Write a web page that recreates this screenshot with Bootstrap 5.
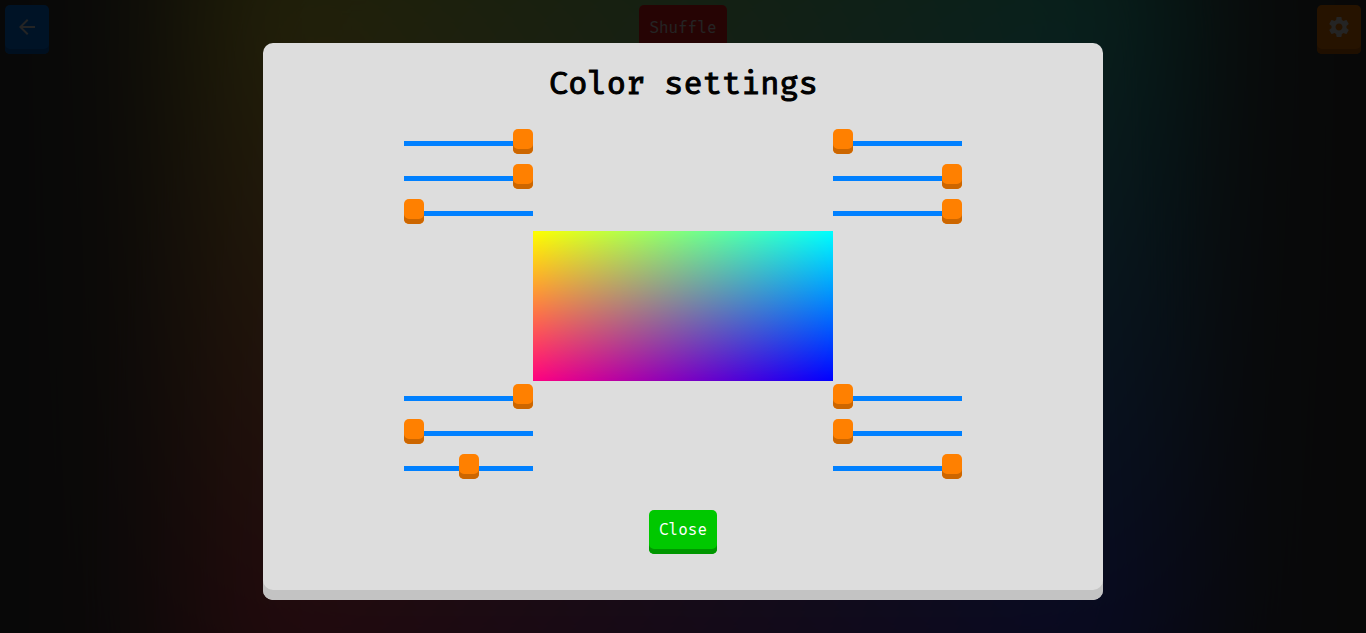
<!DOCTYPE html>
<html lang="en">
<head>
<meta charset="utf-8">
<meta name="viewport" content="width=device-width, initial-scale=1">
<title>Color settings</title>
<link href="https://cdn.jsdelivr.net/npm/bootstrap@5.3.0/dist/css/bootstrap.min.css" rel="stylesheet">
<style>
  body { font-family: "Fira Mono", "DejaVu Sans Mono", monospace; font-size: 16px; background: #3a3a3a; color: #000; }
  .backdrop-glow { inset: 0; overflow: hidden; }
  .blend { --tl: #ff0; --tr: #0ff; --bl: #ff0080; --br: #00f; background: linear-gradient(to right, var(--tl), var(--tr)); position: relative; }
  .blend::after { content: ""; position: absolute; inset: 0; background: linear-gradient(to right, var(--bl), var(--br));
    -webkit-mask-image: linear-gradient(to bottom, transparent, #000); mask-image: linear-gradient(to bottom, transparent, #000); }
  .glow-field.blend { --tl: #fffa28; --tr: #20ffd0; --bl: #ff2850; --br: #2828ff; position: absolute; inset: -110px 185px; filter: blur(75px); }
  .preview { width: 300px; height: 150px; }
  .preview-gap { width: 300px; }
  .toolbar { padding: 5px; }
  .key { height: 49px; min-width: 44px; border: 0; border-radius: 5px; padding: 0 10px 5px; color: #eee; line-height: 1; }
  .key-blue { background: #0080ff; box-shadow: inset 0 -5px #0066cc; }
  .key-red { background: #ff2020; box-shadow: inset 0 -5px #cc0000; padding-bottom: 3px; }
  .key-orange { background: #ff8000; box-shadow: inset 0 -5px #cc6600; }
  .key-green { background: #00c800; box-shadow: inset 0 -5px #009600; color: #fff; height: 44px; margin-top: 22px; }
  .shade { inset: 0; background: rgba(0, 0, 0, .85); padding-top: 43px; }
  .panel { width: 840px; height: 557px; background: #ddd; border-radius: 10px; box-shadow: inset 0 -10px #c3c3c3; }
  .panel h1 { font-size: 32px; line-height: 38px; font-weight: 400; -webkit-text-stroke: 1.1px #000; margin: 21px 0 22px; padding-left: 1px; }
  .slider-set { width: 129px; height: 107px; }
  .slider { appearance: none; -webkit-appearance: none; flex: none; width: 129px; height: 5px; margin: 17px 0 13px; background: #0080ff; }
  .slider-set.lower .slider { margin: 15px 0 15px; }
  .slider::-webkit-slider-thumb { -webkit-appearance: none; width: 20px; height: 25px; border-radius: 5px; background: #ff8000; box-shadow: inset 0 -5px #cc6600; position: relative; top: -2px; }
</style>
</head>
<body class="vh-100 overflow-hidden">
<div class="backdrop-glow position-absolute"><div class="glow-field blend"></div></div>
<header class="toolbar position-relative d-flex justify-content-between">
  <button class="key key-blue" aria-label="Back"><svg width="24" height="24" viewBox="0 0 24 24" fill="currentColor"><path d="M20 11H7.83l5.59-5.59L12 4l-8 8 8 8 1.41-1.41L7.83 13H20v-2z"/></svg></button>
  <button class="key key-red">Shuffle</button>
  <button class="key key-orange" aria-label="Settings"><svg width="24" height="24" viewBox="0 0 24 24" fill="currentColor"><path d="M19.43 12.98c.04-.32.07-.64.07-.98s-.03-.66-.07-.98l2.11-1.65c.19-.15.24-.42.12-.64l-2-3.46c-.12-.22-.39-.3-.61-.22l-2.49 1c-.52-.4-1.08-.73-1.69-.98l-.38-2.65C14.46 2.18 14.25 2 14 2h-4c-.25 0-.46.18-.49.42l-.38 2.65c-.61.25-1.17.59-1.69.98l-2.49-1c-.23-.09-.49 0-.61.22l-2 3.46c-.13.22-.07.49.12.64l2.11 1.65c-.04.32-.07.65-.07.98s.03.66.07.98l-2.11 1.65c-.19.15-.24.42-.12.64l2 3.46c.12.22.39.3.61.22l2.49-1c.52.4 1.08.73 1.69.98l.38 2.65c.03.24.24.42.49.42h4c.25 0 .46-.18.49-.42l.38-2.65c.61-.25 1.17-.59 1.69-.98l2.49 1c.23.09.49 0 .61-.22l2-3.46c.12-.22.07-.49-.12-.64l-2.11-1.65zM12 15.5c-1.93 0-3.5-1.57-3.5-3.5s1.57-3.5 3.5-3.5 3.5 1.57 3.5 3.5-1.57 3.5-3.5 3.5z"/></svg></button>
</header>
<div class="shade position-fixed d-flex align-items-start justify-content-center">
  <main class="panel d-flex flex-column align-items-center">
    <h1>Color settings</h1>
    <div class="d-flex justify-content-center">
      <div class="slider-set d-flex flex-column"><input class="slider" type="range" max="255" value="255"><input class="slider" type="range" max="255" value="255"><input class="slider" type="range" max="255" value="0"></div>
      <div class="preview-gap"></div>
      <div class="slider-set d-flex flex-column"><input class="slider" type="range" max="255" value="0"><input class="slider" type="range" max="255" value="255"><input class="slider" type="range" max="255" value="255"></div>
    </div>
    <div class="preview blend flex-shrink-0"></div>
    <div class="d-flex justify-content-center">
      <div class="slider-set lower d-flex flex-column"><input class="slider" type="range" max="255" value="255"><input class="slider" type="range" max="255" value="0"><input class="slider" type="range" max="255" value="128"></div>
      <div class="preview-gap"></div>
      <div class="slider-set lower d-flex flex-column"><input class="slider" type="range" max="255" value="0"><input class="slider" type="range" max="255" value="0"><input class="slider" type="range" max="255" value="255"></div>
    </div>
    <button class="key key-green">Close</button>
  </main>
</div>
<script src="https://cdn.jsdelivr.net/npm/bootstrap@5.3.0/dist/js/bootstrap.bundle.min.js"></script>
</body>
</html>
